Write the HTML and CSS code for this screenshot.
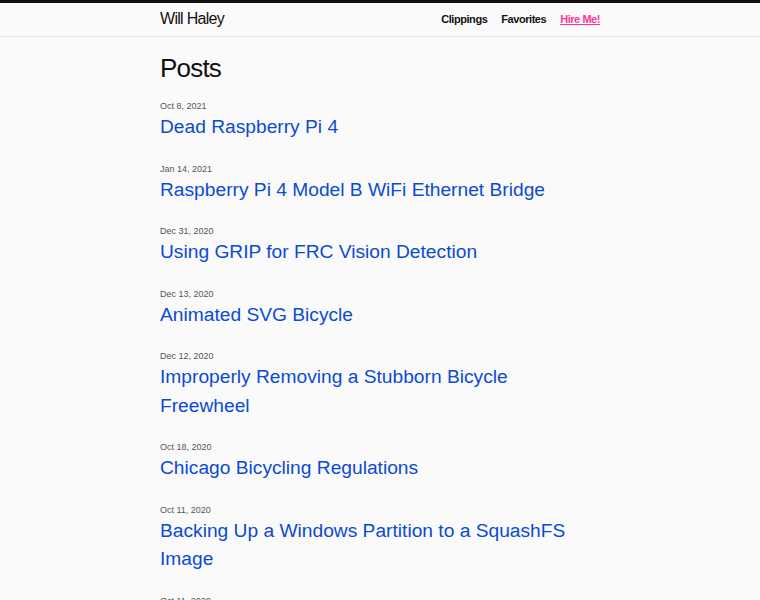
FILE: index.html
```html
<!DOCTYPE html>
<html lang="en">
<head>
<meta charset="utf-8">
<title>Will Haley</title>
<link rel="stylesheet" href="styles.css">
</head>
<body>
<header class="site-header">
  <div class="container header-inner">
    <a class="site-title" href="#">Will Haley</a>
    <nav class="nav">
      <a href="#">Clippings</a>
      <a href="#">Favorites</a>
      <a class="hire" href="#">Hire Me!</a>
    </nav>
  </div>
</header>
<main class="container">
  <h1 class="page-title">Posts</h1>
  <ul class="posts">
    <li><span class="date">Oct 8, 2021</span><a class="post-link" href="#">Dead Raspberry Pi 4</a></li>
    <li><span class="date">Jan 14, 2021</span><a class="post-link" href="#">Raspberry Pi 4 Model B WiFi Ethernet Bridge</a></li>
    <li><span class="date">Dec 31, 2020</span><a class="post-link" href="#">Using GRIP for FRC Vision Detection</a></li>
    <li><span class="date">Dec 13, 2020</span><a class="post-link" href="#">Animated SVG Bicycle</a></li>
    <li><span class="date">Dec 12, 2020</span><a class="post-link" href="#">Improperly Removing a Stubborn Bicycle Freewheel</a></li>
    <li><span class="date">Oct 18, 2020</span><a class="post-link" href="#">Chicago Bicycling Regulations</a></li>
    <li><span class="date">Oct 11, 2020</span><a class="post-link" href="#">Backing Up a Windows Partition to a SquashFS Image</a></li>
    <li><span class="date">Oct 11, 2020</span><a class="post-link" href="#">Bicycle Maintenance Log</a></li>
  </ul>
</main>
</body>
</html>
```
FILE: styles.css
```css
html, body {
  margin: 0;
  padding: 0;
}
body {
  background: #fafafa;
  font-family: "Liberation Sans", Arial, sans-serif;
  color: #111;
}
.container {
  max-width: 440px;
  margin: 0 auto;
}
.site-header {
  border-top: 3px solid #111;
  border-bottom: 1px solid #e2e2e2;
  height: 33px;
}
.header-inner {
  display: flex;
  justify-content: space-between;
  align-items: center;
  height: 31px;
}
.site-title {
  font-size: 16px;
  color: #111;
  text-decoration: none;
  letter-spacing: -0.7px;
}
.nav {
  display: flex;
  gap: 14px;
  font-size: 11px;
  font-weight: bold;
  letter-spacing: -0.45px;
}
.nav a {
  color: #111;
  text-decoration: none;
}
.nav a.hire {
  color: #ff3399;
  text-decoration: underline;
}
.page-title {
  font-size: 26px;
  font-weight: normal;
  line-height: 31px;
  margin: 16px 0 15px;
  letter-spacing: -0.8px;
}
.posts {
  list-style: none;
  margin: 0;
  padding: 0;
}
.posts li {
  margin-bottom: 20px;
}
.date {
  display: block;
  font-size: 9px;
  line-height: 14px;
  color: #555;
}
.post-link {
  display: block;
  font-size: 19.2px;
  line-height: 28.5px;
  color: #0b4ad5;
  text-decoration: none;
}
```
